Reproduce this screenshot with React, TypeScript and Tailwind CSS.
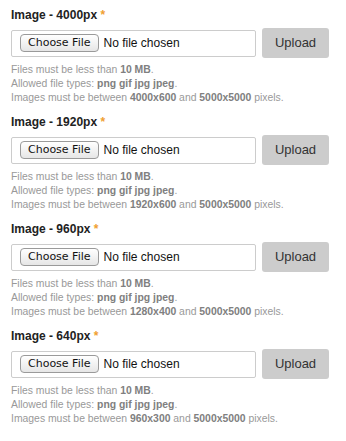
const fields = [
  { name: "4000px", min: "4000x600" },
  { name: "1920px", min: "1920x600" },
  { name: "960px", min: "1280x400" },
  { name: "640px", min: "960x300" },
];

function UploadField({ name, min }: { name: string; min: string }) {
  return (
    <div className="mb-[9px]">
      <label className="block text-[12px] leading-[16px] font-bold text-[#222]">
        Image - {name} <span className="text-[#f0a030]">*</span>
      </label>
      <div className="mt-[5px] flex items-center gap-[6px]">
        <div className="flex h-[27px] w-[245px] items-center rounded-[2px] border border-[#ccc] bg-white pl-[8px]">
          <span className="flex h-[18px] items-center rounded-[4px] border border-[#9a9a9a] bg-gradient-to-b from-white to-[#e6e6e6] px-[7px] text-[11px] text-[#111] [font-family:'DejaVu_Sans',sans-serif]">
            Choose File
          </span>
          <span className="ml-[5px] text-[12px] text-[#111]">No file chosen</span>
        </div>
        <button className="h-[30px] w-[67px] rounded-[3px] bg-[#cccccc] text-[13px] text-[#333]">
          Upload
        </button>
      </div>
      <div className="mt-[5px] text-[10.4px] leading-[14px] text-[#999]">
        <p>
          Files must be less than <b className="text-[#808080]">10 MB</b>.
        </p>
        <p>
          Allowed file types: <b className="text-[#808080]">png gif jpg jpeg</b>.
        </p>
        <p>
          Images must be between <b className="text-[#808080]">{min}</b> and{" "}
          <b className="text-[#808080]">5000x5000</b> pixels.
        </p>
      </div>
    </div>
  );
}

export default function App() {
  return (
    <div className="min-h-screen bg-white px-[11px] pt-[7px] [font-family:'Liberation_Sans',Arial,sans-serif]">
      {fields.map((f) => (
        <UploadField key={f.name} name={f.name} min={f.min} />
      ))}
    </div>
  );
}
